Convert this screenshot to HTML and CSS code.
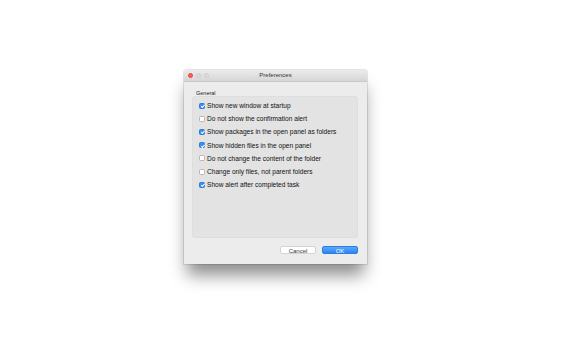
FILE: index.html
```html
<!DOCTYPE html>
<html>
<head>
  <meta charset="utf-8">
  <title>Preferences</title>
  <link rel="stylesheet" href="styles.css">
</head>
<body>
  <div class="window">
    <div class="titlebar">
      <div class="lights">
        <span class="light close"></span>
        <span class="light"></span>
        <span class="light"></span>
      </div>
      <div class="title">Preferences</div>
    </div>
    <div class="content">
      <div class="section-label">General</div>
      <div class="group">
        <label class="row"><span class="box checked"></span>Show new window at startup</label>
        <label class="row"><span class="box"></span>Do not show the confirmation alert</label>
        <label class="row"><span class="box checked"></span>Show packages in the open panel as folders</label>
        <label class="row"><span class="box checked"></span>Show hidden files in the open panel</label>
        <label class="row"><span class="box"></span>Do not change the content of the folder</label>
        <label class="row"><span class="box"></span>Change only files, not parent folders</label>
        <label class="row"><span class="box checked"></span>Show alert after completed task</label>
      </div>
      <div class="buttons">
        <button class="btn">Cancel</button>
        <button class="btn primary">OK</button>
      </div>
    </div>
  </div>
</body>
</html>
```

FILE: styles.css
```css
html, body {
  height: 100%;
}

body {
  margin: 0;
  padding-top: 70px;
  box-sizing: border-box;
  background-color: #fff;
  font-family: "Liberation Sans", Arial, sans-serif;
  color: #222;
}

.window {
  width: 183px;
  margin-left: 184px;
  background-color: #ececec;
  border-radius: 3px 3px 0 0;
  box-shadow: 0 14px 16px -3px rgba(0, 0, 0, 0.45), 0 0 0 1px rgba(0, 0, 0, 0.1);
}

.titlebar {
  position: relative;
  height: 11px;
  background: linear-gradient(#ebebeb, #d6d6d6);
  border-bottom: 1px solid #c8c8c8;
  border-radius: 3px 3px 0 0;
}

.lights {
  position: absolute;
  left: 4px;
  top: 3px;
  display: flex;
  gap: 3px;
}

.light {
  width: 5px;
  height: 5px;
  border-radius: 50%;
  background-color: #dcdcdc;
  border: 0.5px solid #cfcfcf;
  box-sizing: border-box;
}

.light.close {
  background-color: #fc605c;
  border-color: #e2463f;
}

.title {
  text-align: center;
  font-size: 6px;
  line-height: 11px;
  color: #333;
}

.content {
  padding: 8px 9px 10px 8px;
}

.section-label {
  font-size: 5.5px;
  line-height: 6px;
  color: #222;
  margin-left: 4px;
}

.group {
  height: 142px;
  background-color: #e3e3e3;
  border: 1px solid #dedede;
  border-radius: 3px;
  padding: 2px 0 0 6px;
  box-sizing: border-box;
}

.row {
  display: flex;
  align-items: center;
  height: 13.2px;
  font-size: 6.6px;
  color: #111;
}

.box {
  width: 6px;
  height: 6px;
  margin-right: 2px;
  background-color: #fff;
  border: 0.5px solid #b5b5b5;
  border-radius: 1.5px;
  box-sizing: border-box;
  position: relative;
}

.box.checked {
  background-color: #3a8ff5;
  border-color: #2d79d6;
}

.box.checked::after {
  content: "";
  position: absolute;
  left: 1.6px;
  top: 0.4px;
  width: 1.4px;
  height: 3px;
  border: solid #fff;
  border-width: 0 1px 1px 0;
  transform: rotate(45deg);
}

.buttons {
  display: flex;
  justify-content: flex-end;
  gap: 6px;
  margin-top: 8px;
}

.btn {
  width: 36px;
  height: 8px;
  padding: 0;
  font-family: "Liberation Sans", Arial, sans-serif;
  font-size: 6px;
  line-height: 8px;
  color: #333;
  background-color: #fff;
  border: 0.5px solid #d3d3d3;
  border-radius: 2px;
}

.btn.primary {
  color: #fff;
  background: linear-gradient(#5aa9fb, #2a86f3);
  border-color: #2b7de0;
}
```
